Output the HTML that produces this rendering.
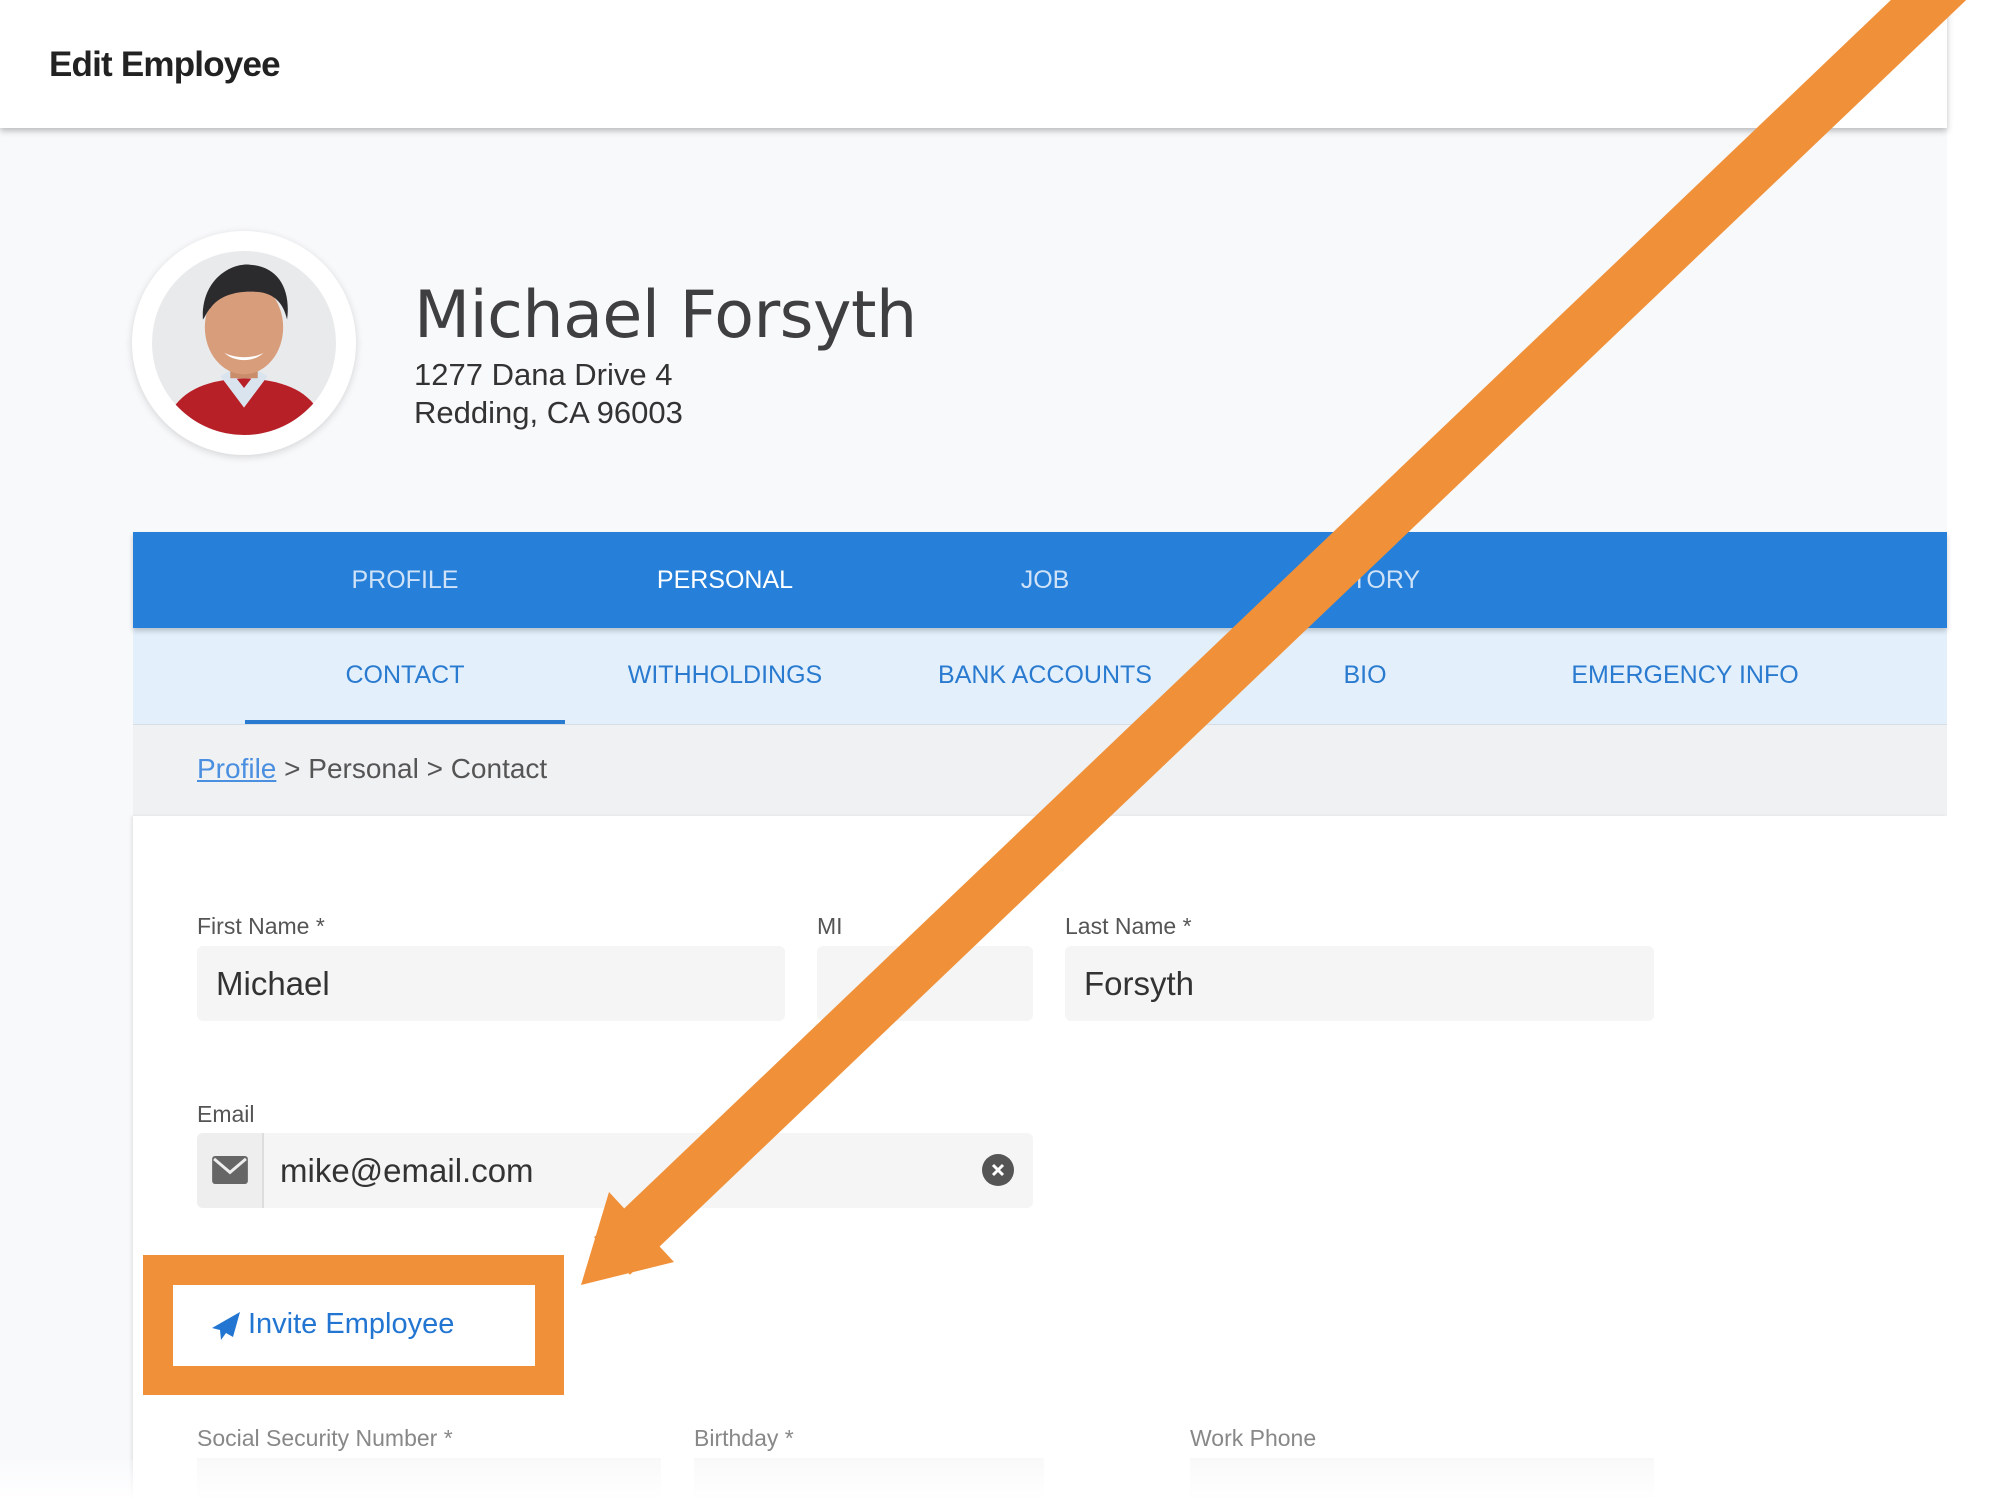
<!DOCTYPE html>
<html><head><meta charset="utf-8"><style>
*{margin:0;padding:0;box-sizing:border-box}
body{width:2014px;height:1500px;overflow:hidden;background:#fff;font-family:"Liberation Sans",Arial,sans-serif;position:relative}
.abs{position:absolute}
#main{left:0;top:128px;width:1947px;height:1372px;background:#f8f9fb}
#hdr{left:0;top:0;width:1947px;height:128px;background:#fff;box-shadow:0 3px 6px rgba(0,0,0,.25);z-index:2}
#hdr span{position:absolute;left:49px;top:45px;font-size:35px;color:#222;font-weight:bold;letter-spacing:-0.8px}
.tabs{left:133px;width:1814px;display:flex;padding-left:112px}
.tab{width:320px;text-align:center}
#t1{top:532px;height:96px;background:#2680d9;box-shadow:0 3px 5px rgba(0,0,0,.2);z-index:1}
#t1 .tab{line-height:96px;font-size:25px;color:#cfe2f7}
#t2{top:628px;height:97px;background:#e3f0fc;border-bottom:1px solid #d8dde3}
#t2 .tab{line-height:94px;font-size:25px;color:#2a7bd0}
#bc{left:133px;top:725px;width:1814px;height:91px;background:#f0f1f3;font-size:28px;color:#555;padding:28px 0 0 64px}
#content{left:133px;top:816px;width:1814px;height:684px;background:#fff;box-shadow:-2px 0 3px rgba(0,0,0,.08)}
.lbl{font-size:23px;color:#555}
.inp{background:#f5f5f5;border-radius:6px;height:75px;font-size:33px;color:#333;line-height:75px;padding-left:19px}
</style></head><body>
<div id="main" class="abs"></div>
<div id="hdr" class="abs"><span>Edit Employee</span></div>

<div class="abs" style="left:132px;top:231px;width:224px;height:224px;border-radius:50%;background:#fff;box-shadow:0 2px 8px rgba(0,0,0,.15)"></div>
<svg class="abs" style="left:152px;top:251px" width="184" height="184" viewBox="0 0 188 188">
<defs><clipPath id="c"><circle cx="94" cy="94" r="94"/></clipPath></defs>
<g clip-path="url(#c)">
<rect width="188" height="188" fill="#e9eaec"/>
<path d="M10 188 C20 145 50 132 94 130 C140 132 170 145 180 188Z" fill="#b82028"/>
<path d="M70 128 L94 160 L118 128 L108 122 L94 140 L80 122Z" fill="#d9e4ee"/>
<rect x="80" y="100" width="28" height="30" fill="#c98d6c"/>
<ellipse cx="94" cy="78" rx="40" ry="48" fill="#d89d7b"/>
<path d="M52 70 C50 30 80 12 100 14 C130 16 142 40 138 70 C134 52 124 44 110 42 C90 40 70 44 60 58 C56 62 54 68 52 70Z" fill="#2b2b2e"/>
<path d="M74 104 C84 114 104 114 114 104 C104 110 84 110 74 104Z" fill="#fff"/>
</g></svg>

<div class="abs" style="left:414px;top:278px;font-size:65px;color:#3f3f42;font-family:'DejaVu Sans','Liberation Sans',sans-serif;letter-spacing:-0.5px">Michael Forsyth</div>
<div class="abs" style="left:414px;top:356px;font-size:31px;color:#333;line-height:38px">1277 Dana Drive 4<br>Redding, CA 96003</div>

<div id="t1" class="abs tabs"><div class="tab">PROFILE</div><div class="tab" style="color:#fff">PERSONAL</div><div class="tab">JOB</div><div class="tab">HISTORY</div></div>
<div id="t2" class="abs tabs"><div class="tab" style="border-bottom:4px solid #2a7bd0;height:96px">CONTACT</div><div class="tab">WITHHOLDINGS</div><div class="tab">BANK ACCOUNTS</div><div class="tab">BIO</div><div class="tab">EMERGENCY INFO</div></div>
<div id="bc" class="abs"><span style="color:#4a8fe0;text-decoration:underline">Profile</span> &gt; Personal &gt; Contact</div>
<div id="content" class="abs"></div>

<div class="abs lbl" style="left:197px;top:913px">First Name *</div>
<div class="abs lbl" style="left:817px;top:913px">MI</div>
<div class="abs lbl" style="left:1065px;top:913px">Last Name *</div>
<div class="abs inp" style="left:197px;top:946px;width:588px">Michael</div>
<div class="abs inp" style="left:817px;top:946px;width:216px"></div>
<div class="abs inp" style="left:1065px;top:946px;width:589px">Forsyth</div>

<div class="abs lbl" style="left:197px;top:1101px">Email</div>
<div class="abs inp" style="left:197px;top:1133px;width:836px;padding-left:83px">mike@email.com</div>
<div class="abs" style="left:197px;top:1133px;width:67px;height:75px;background:#eeeeee;border-right:2px solid #ddd;border-radius:6px 0 0 6px"></div>
<svg class="abs" style="left:212px;top:1156px" width="36" height="28" viewBox="0 0 37 29"><rect width="37" height="29" rx="3" fill="#666"/><path d="M2 3 L18.5 17 L35 3" stroke="#eee" stroke-width="3" fill="none"/></svg>
<svg class="abs" style="left:982px;top:1154px" width="32" height="32" viewBox="0 0 32 32"><circle cx="16" cy="16" r="16" fill="#555"/><path d="M11 11L21 21M21 11L11 21" stroke="#fff" stroke-width="3"/></svg>

<div class="abs" style="left:143px;top:1255px;width:421px;height:140px;background:#f0913a"></div>
<div class="abs" style="left:173px;top:1285px;width:362px;height:81px;background:#fff"></div>
<svg class="abs" style="left:211px;top:1311px" width="30" height="30" viewBox="0 0 30 30"><path d="M29 1 L1 17 L9 19 L10 29 L15 22 L22 26Z" fill="#2276d2"/></svg>
<div class="abs" style="left:248px;top:1308px;font-size:29px;color:#2276d2;font-weight:500">Invite Employee</div>

<div class="abs lbl" style="left:197px;top:1425px;color:#888">Social Security Number *</div>
<div class="abs lbl" style="left:694px;top:1425px;color:#888">Birthday *</div>
<div class="abs lbl" style="left:1190px;top:1425px;color:#888">Work Phone</div>
<div class="abs" style="left:197px;top:1458px;width:464px;height:42px;background:#f8f8f8"></div>
<div class="abs" style="left:694px;top:1458px;width:350px;height:42px;background:#f8f8f8"></div>
<div class="abs" style="left:1190px;top:1458px;width:464px;height:42px;background:#f8f8f8"></div>
<div class="abs" style="left:0;top:1460px;width:2014px;height:40px;background:linear-gradient(rgba(255,255,255,0.2),#fff)"></div>

<svg class="abs" style="left:0;top:0;z-index:5" width="2014" height="1500">
<line x1="1960" y1="-30" x2="612" y2="1256" stroke="#f0913a" stroke-width="52"/>
<polygon points="581,1285 609,1192 674,1262" fill="#f0913a"/>
</svg>
</body></html>
